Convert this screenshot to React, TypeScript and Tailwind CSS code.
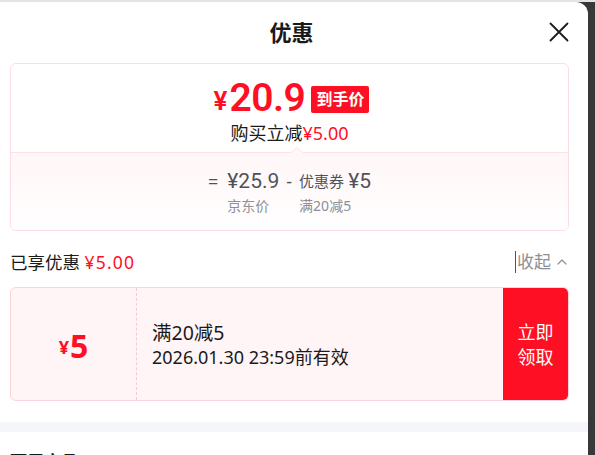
import { ChevronUp } from "lucide-react";

const App = () => {
  return (
    <div
      className="w-[595px] h-[455px] overflow-hidden bg-[#383838]"
      style={{ fontFamily: "'Noto Sans', 'Noto Sans CJK SC', sans-serif" }}
    >
      <div className="h-[2px] bg-[#e4e4e4]" />
      <div className="w-[588px] h-[453px] bg-white rounded-tr-[12px] overflow-hidden">
        {/* Header */}
        <div className="relative h-[61px] flex items-center justify-center">
          <span className="text-[22px] font-bold text-[#1a1a1a] mr-[5px]">优惠</span>
          <svg className="absolute right-[19px] top-[20px] w-[20px] h-[20px]" viewBox="0 0 20 20" fill="none" stroke="#1a1a1a" strokeWidth={1.8} strokeLinecap="round">
            <path d="M1.5 1.5 L18.5 18.5 M18.5 1.5 L1.5 18.5" />
          </svg>
        </div>

        {/* Price card */}
        <div className="ml-[10px] w-[559px] h-[168px] border border-[#fcdde4] rounded-[6px] overflow-hidden flex flex-col">
          <div className="relative h-[88px] flex flex-col items-center pt-[14px]">
            <div className="flex items-center h-[40px] ml-[4px]">
              <span className="text-[26px] font-semibold text-[#ff0f23] mt-[6px] mr-[2px]" style={{ fontFamily: "Roboto, sans-serif" }}>¥</span>
              <span className="text-[39px] leading-none font-semibold text-[#ff0f23] tracking-[-0.5px]" style={{ fontFamily: "Roboto, sans-serif" }}>20.9</span>
              <span className="ml-[6px] px-[5px] h-[27px] flex items-center bg-[#ff0f23] text-white text-[16px] font-bold rounded-[2px] mt-[2px]">到手价</span>
            </div>
            <div className="mt-[3px] text-[18px] leading-[24px] text-[#1a1a1a]">
              购买立减<span className="text-[#ff0f23]">¥5.00</span>
            </div>
            <div className="absolute bottom-[-1px] left-[279px] w-0 h-0 border-x-[7px] border-x-transparent border-b-[6px] border-b-[#fde3e8]" />
            <div className="absolute bottom-[-1px] left-[280px] w-0 h-0 border-x-[6px] border-x-transparent border-b-[5px] border-b-[#fff7f8]" />
          </div>
          <div className="flex-1 border-t border-[#fde3e8] bg-gradient-to-b from-[#fff6f7] to-white flex justify-center pt-[15px]">
            <div className="flex items-start text-[#505259]">
              <span className="text-[18px] leading-[26px] mr-[9px]">=</span>
              <div className="flex flex-col items-start">
                <span className="text-[21px] leading-[26px]" style={{ fontFamily: "Roboto, sans-serif" }}>¥25.9</span>
                <span className="mt-[2px] text-[14px] leading-[20px] text-[#8c8f96]">京东价</span>
              </div>
              <span className="text-[18px] leading-[26px] mx-[7px]">-</span>
              <div className="flex flex-col items-start">
                <span className="flex items-center leading-[26px]">
                  <span className="text-[15px]">优惠券</span>
                  <span className="ml-[4px] text-[21px]" style={{ fontFamily: "Roboto, sans-serif" }}>¥5</span>
                </span>
                <span className="mt-[2px] text-[14px] leading-[20px] text-[#8c8f96]">满20减5</span>
              </div>
            </div>
          </div>
        </div>

        {/* Enjoyed discount row */}
        <div className="ml-[10px] w-[560px] h-[56px] flex items-center justify-between pt-[6px]">
          <div className="text-[17.5px] text-[#1a1a1a]">
            已享优惠 <span className="text-[#ff0f23] tracking-[1.2px]">¥5.00</span>
          </div>
          <div className="flex items-center text-[17px] text-[#8c8f96]">
            <span className="w-[1px] h-[22px] bg-[#555] mr-[1px]" />
            <span>收起</span>
            <ChevronUp className="w-[16px] h-[16px] ml-[3px]" strokeWidth={1.8} />
          </div>
        </div>

        {/* Coupon */}
        <div className="ml-[10px] w-[559px] h-[114px] border border-[#fcd3da] rounded-[6px] overflow-hidden flex bg-[#fff4f6]">
          <div className="w-[125px] flex items-center justify-center text-[#ff0f23] font-bold pt-[4px]">
            <span className="text-[18px] mt-[2px]">¥</span>
            <span className="text-[32px] leading-none ml-[1px]">5</span>
          </div>
          <div className="border-l border-dashed border-[#fbc7d1]" />
          <div className="flex-1 flex flex-col justify-center pl-[15px] text-[#1a1a1a] pt-[2px]">
            <span className="text-[19.5px] leading-[25px]">满20减5</span>
            <span className="text-[18px] leading-[25px]">2026.01.30 23:59前有效</span>
          </div>
          <div className="w-[65px] bg-[#ff0f23] flex flex-col items-center justify-center text-white text-[18px] leading-[25px] pt-[2px]">
            <span>立即</span>
            <span>领取</span>
          </div>
        </div>

        <div className="mt-[21px] h-[10px] bg-[#f5f6fa]" />
        <div className="pl-[10px] pt-[17px] text-[17px] font-bold text-[#1a1a1a]">可用商品</div>
      </div>
    </div>
  );
};

export default App;
